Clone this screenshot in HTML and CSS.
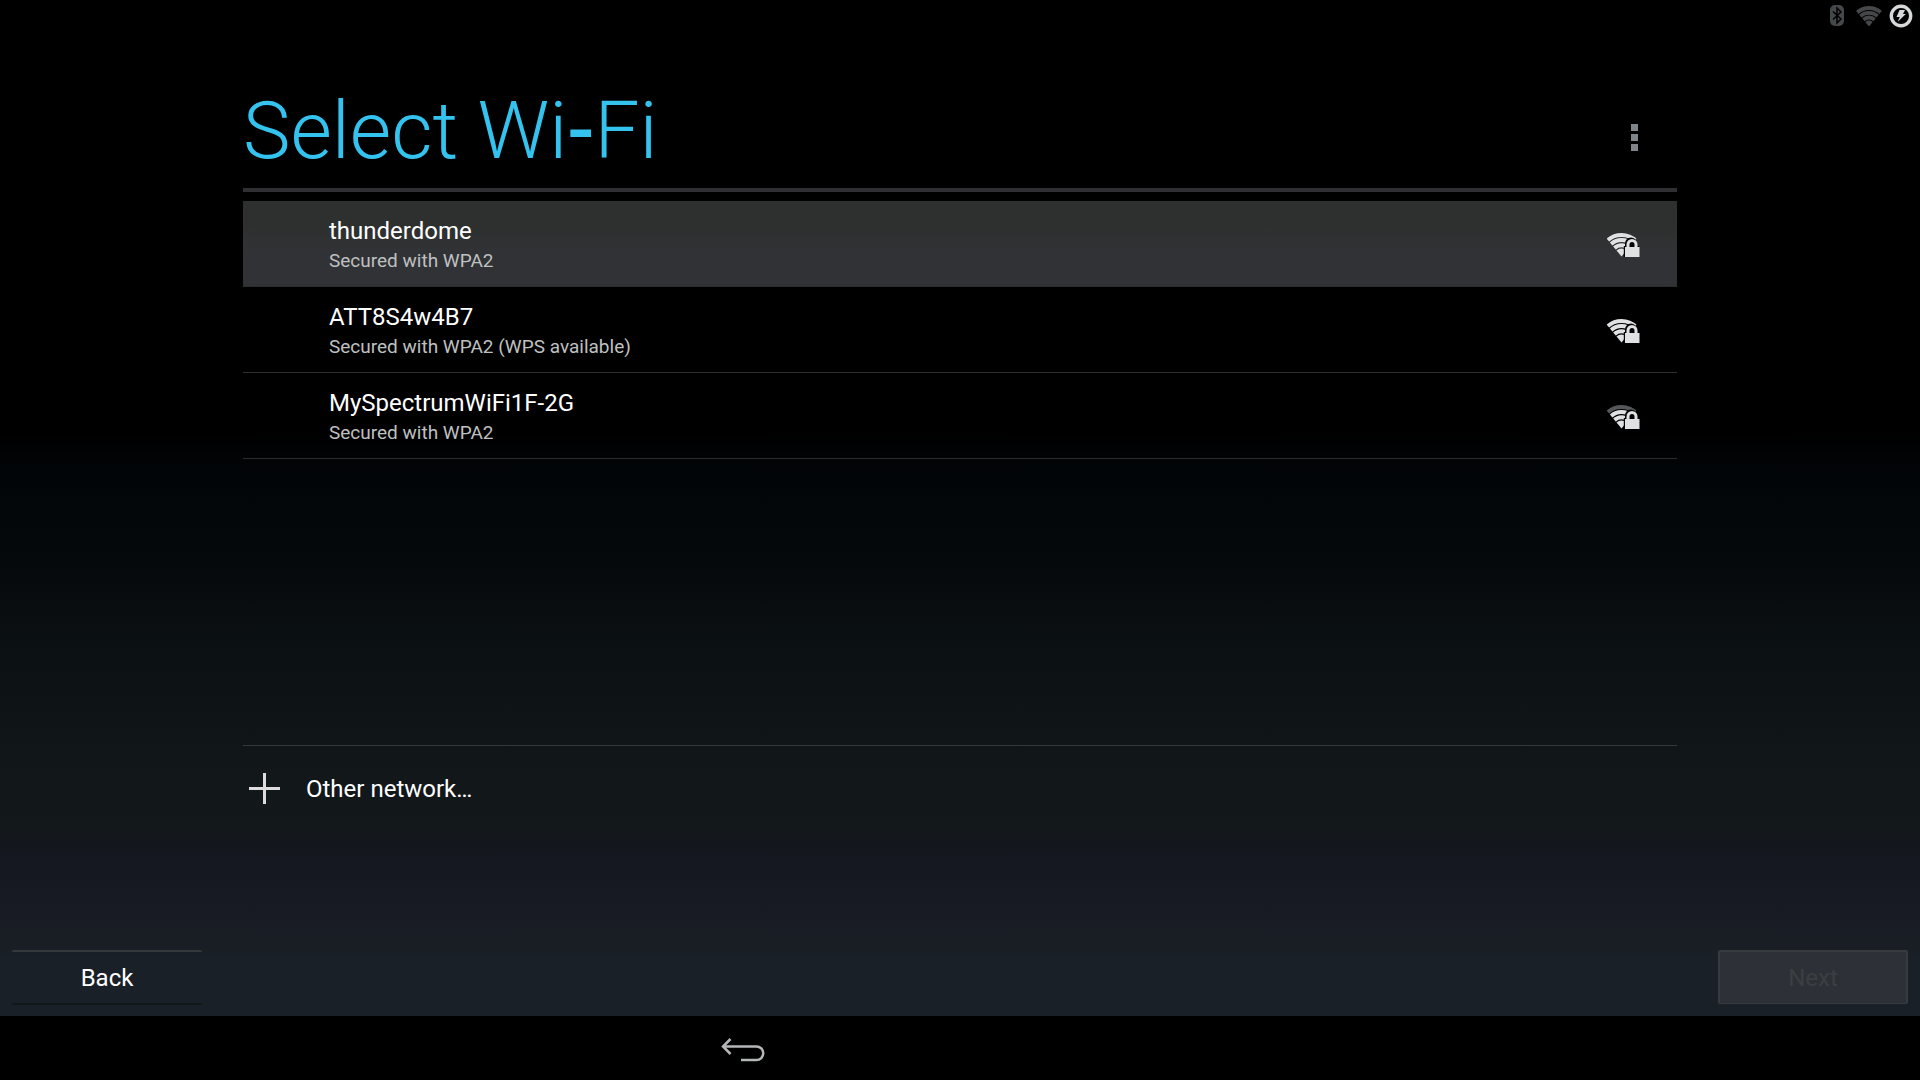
FILE: index.html
```html
<!DOCTYPE html>
<html lang="en">
<head>
<meta charset="utf-8">
<title>Select Wi-Fi</title>
<link rel="stylesheet" href="styles.css">
</head>
<body>
<svg class="sprite" aria-hidden="true">
  <clipPath id="wedge"><path d="M14.500 25.500L-4.700 2.400V-6h38.400v8.400z"/></clipPath>
  <symbol id="lock" viewBox="0 -1 34 27">
    <path class="halo" d="M16.800 26V15h1.200v-2.500a6 6 0 0 1 12 0V15h2v11z"/>
    <path d="M18 16h14.500v10H18z"/>
    <path class="shackle" d="M21 16.500v-3a4 4 0 0 1 8 0v3"/>
  </symbol>
  <symbol id="wifi-inner" viewBox="0 -1 34 27">
    <g clip-path="url(#wedge)">
      <circle class="ring" cx="14.500" cy="24.500" r="15.400"/>
      <circle class="ring" cx="14.500" cy="24.500" r="10.200"/>
      <circle cx="14.500" cy="24.500" r="7"/>
    </g>
  </symbol>
  <symbol id="wifi-outer" viewBox="0 -1 34 27">
    <g clip-path="url(#wedge)"><circle class="ring" cx="14.500" cy="24.500" r="20.600"/></g>
  </symbol>
</svg>
<div class="screen">
  <header class="status">
    <svg class="status-bt" viewBox="0 0 14 22" role="img" aria-label="Bluetooth">
      <rect width="14" height="21" rx="5" fill="#45484b"/>
      <path d="M3 6.500l8 7.500-4 4V3l4 4-8 7.500" fill="none" stroke="#000" stroke-width="1.500"/>
    </svg>
    <svg class="status-wifi" viewBox="0 0 26 20" role="img" aria-label="Wi-Fi">
      <clipPath id="fan"><path d="M13 20.500L-3 1V-4h32v5z"/></clipPath>
      <g clip-path="url(#fan)" fill="none" stroke="#45484b" stroke-width="3.800">
        <circle cx="13" cy="19.500" r="17.500"/>
        <circle cx="13" cy="19.500" r="12.700"/>
        <circle cx="13" cy="19.500" r="8"/>
        <circle cx="13" cy="19.500" r="2.500" stroke-width="5"/>
      </g>
    </svg>
    <svg class="status-power" viewBox="0 0 24 24" role="img" aria-label="Charging">
      <circle cx="12" cy="12" r="9.700" fill="none" stroke="#d6d8da" stroke-width="3.400"/>
      <path d="M10.500 6h5.500l-2 4h2.800L8.600 18l2.200-5H7.500z" fill="#d6d8da"/>
    </svg>
  </header>
  <main class="content">
    <div class="title-bar">
      <h1 class="title">Select Wi<span class="hyphen">-</span>Fi</h1>
      <button class="overflow" type="button" aria-label="More options"><i></i><i></i><i></i></button>
    </div>
    <ul class="networks">
      <li><button class="network selected" type="button">
        <span class="label"><span class="name">thunderdome</span><span class="detail">Secured with WPA2</span></span>
        <svg class="signal" viewBox="0 -1 34 27"><use href="#wifi-outer" y="-1" width="34" height="27"/><use href="#wifi-inner" y="-1" width="34" height="27"/><use href="#lock" y="-1" width="34" height="27"/></svg>
      </button></li>
      <li><button class="network" type="button">
        <span class="label"><span class="name">ATT8S4w4B7</span><span class="detail">Secured with WPA2 (WPS available)</span></span>
        <svg class="signal" viewBox="0 -1 34 27"><use href="#wifi-outer" y="-1" width="34" height="27"/><use href="#wifi-inner" y="-1" width="34" height="27"/><use href="#lock" y="-1" width="34" height="27"/></svg>
      </button></li>
      <li><button class="network" type="button">
        <span class="label"><span class="name">MySpectrumWiFi1F-2G</span><span class="detail">Secured with WPA2</span></span>
        <svg class="signal" viewBox="0 -1 34 27"><use class="weak" href="#wifi-outer" y="-1" width="34" height="27"/><use href="#wifi-inner" y="-1" width="34" height="27"/><use href="#lock" y="-1" width="34" height="27"/></svg>
      </button></li>
    </ul>
    <button class="other" type="button">
      <svg class="plus" viewBox="0 0 33 33" aria-hidden="true"><path d="M1 16.500h31M16.500 1v31" stroke="#dcdcdf" stroke-width="3"/></svg>
      Other network…
    </button>
  </main>
  <footer class="actions">
    <button class="action back" type="button">Back</button>
    <button class="action next" type="button" disabled>Next</button>
  </footer>
  <nav class="navbar">
    <button class="nav-back" type="button" aria-label="Back">
      <svg viewBox="0 0 44 24" aria-hidden="true"><path d="M9.500 1L2 8.500l7.500 7.500M2 8.500h33.500a6.500 6.500 0 0 1 0 13.500H20" fill="none" stroke="#b4b6b8" stroke-width="2.500"/></svg>
    </button>
  </nav>
</div>
</body>
</html>
```
FILE: styles.css
```css
* { box-sizing: border-box; }

body {
  margin: 0;
  background: #000;
  color: #fff;
  font-family: Roboto, "Liberation Sans", sans-serif;
  font-size: 24px;
}

button {
  margin: 0;
  padding: 0;
  border: 0;
  background: none;
  color: inherit;
  font: inherit;
}

svg { display: block; }
.sprite { position: absolute; width: 0; height: 0; }

.screen {
  display: flex;
  flex-direction: column;
  min-height: 100vh;
  background: linear-gradient(#000 40%, #020508 44%, #05090c 52%, #0b1013 60%, #12171a 72%, #13181b 77%, #14171f 79%, #181b23 85%, #1a2027 89%);
}

.status {
  display: flex;
  justify-content: flex-end;
  align-items: center;
  height: 32px;
  padding-right: 7px;
}
.status-bt { width: 14px; height: 22px; margin-right: 12px; }
.status-wifi { width: 26px; height: 20px; margin-right: 7px; }
.status-power { width: 24px; height: 24px; }

.content {
  flex: 1;
  display: flex;
  flex-direction: column;
  padding: 0 243px;
}

.title-bar {
  display: flex;
  align-items: flex-end;
  justify-content: space-between;
  height: 160px;
  padding: 0 39px 15px 0;
  border-bottom: 4px solid #2e2e33;
}
.title {
  margin: 0;
  color: #33c3ee;
  font-size: 80px;
  font-weight: 300;
  line-height: 84px;
}
.hyphen { font-weight: 500; }
.overflow { display: grid; gap: 3px; margin-bottom: 22px; }
.overflow i { width: 7px; height: 7px; background: #7f8588; }

.networks {
  flex: 1;
  margin: 0;
  padding: 9px 0 0;
  list-style: none;
}
.network {
  display: flex;
  align-items: center;
  justify-content: space-between;
  width: 100%;
  height: 86px;
  padding: 0 36px 0 86px;
  border-bottom: 1px solid #2b2d2f;
  text-align: left;
}
.selected { background: linear-gradient(#2e302f 30%, #313235 60%); }
.label { display: grid; padding-top: 3px; }
.name { line-height: 30px; }
.detail { color: #bec0c1; font-size: 19px; line-height: 29px; }

.signal { width: 34px; height: 27px; fill: #dfe1e3; stroke: #dfe1e3; stroke-width: 0; }
.ring { fill: none; stroke-width: 4px; }
.halo { fill: #050505; }
.selected .halo { fill: #303133; }
.shackle { fill: none; stroke-width: 3px; }
.weak { stroke: #55585a; }

.other {
  display: flex;
  align-items: center;
  gap: 25px;
  height: 86px;
  padding-left: 5px;
  border-top: 1px solid #36393b;
}
.plus { width: 33px; height: 33px; }

.actions {
  display: flex;
  align-items: flex-start;
  justify-content: space-between;
  padding: 119px 12px 11px;
}
.action { width: 190px; height: 55px; border-radius: 2px; }
.back {
  border-top: 2px solid #35393b;
  border-bottom: 2px solid #12171a;
}
.next {
  height: 54px;
  border: 2px solid #373b3f;
  border-bottom-width: 1px;
  background: #2d3137;
  color: #3b3f42;
}

.navbar {
  height: 64px;
  padding: 22px 721px;
  background: #000;
}
.nav-back svg { width: 44px; height: 24px; }
```
